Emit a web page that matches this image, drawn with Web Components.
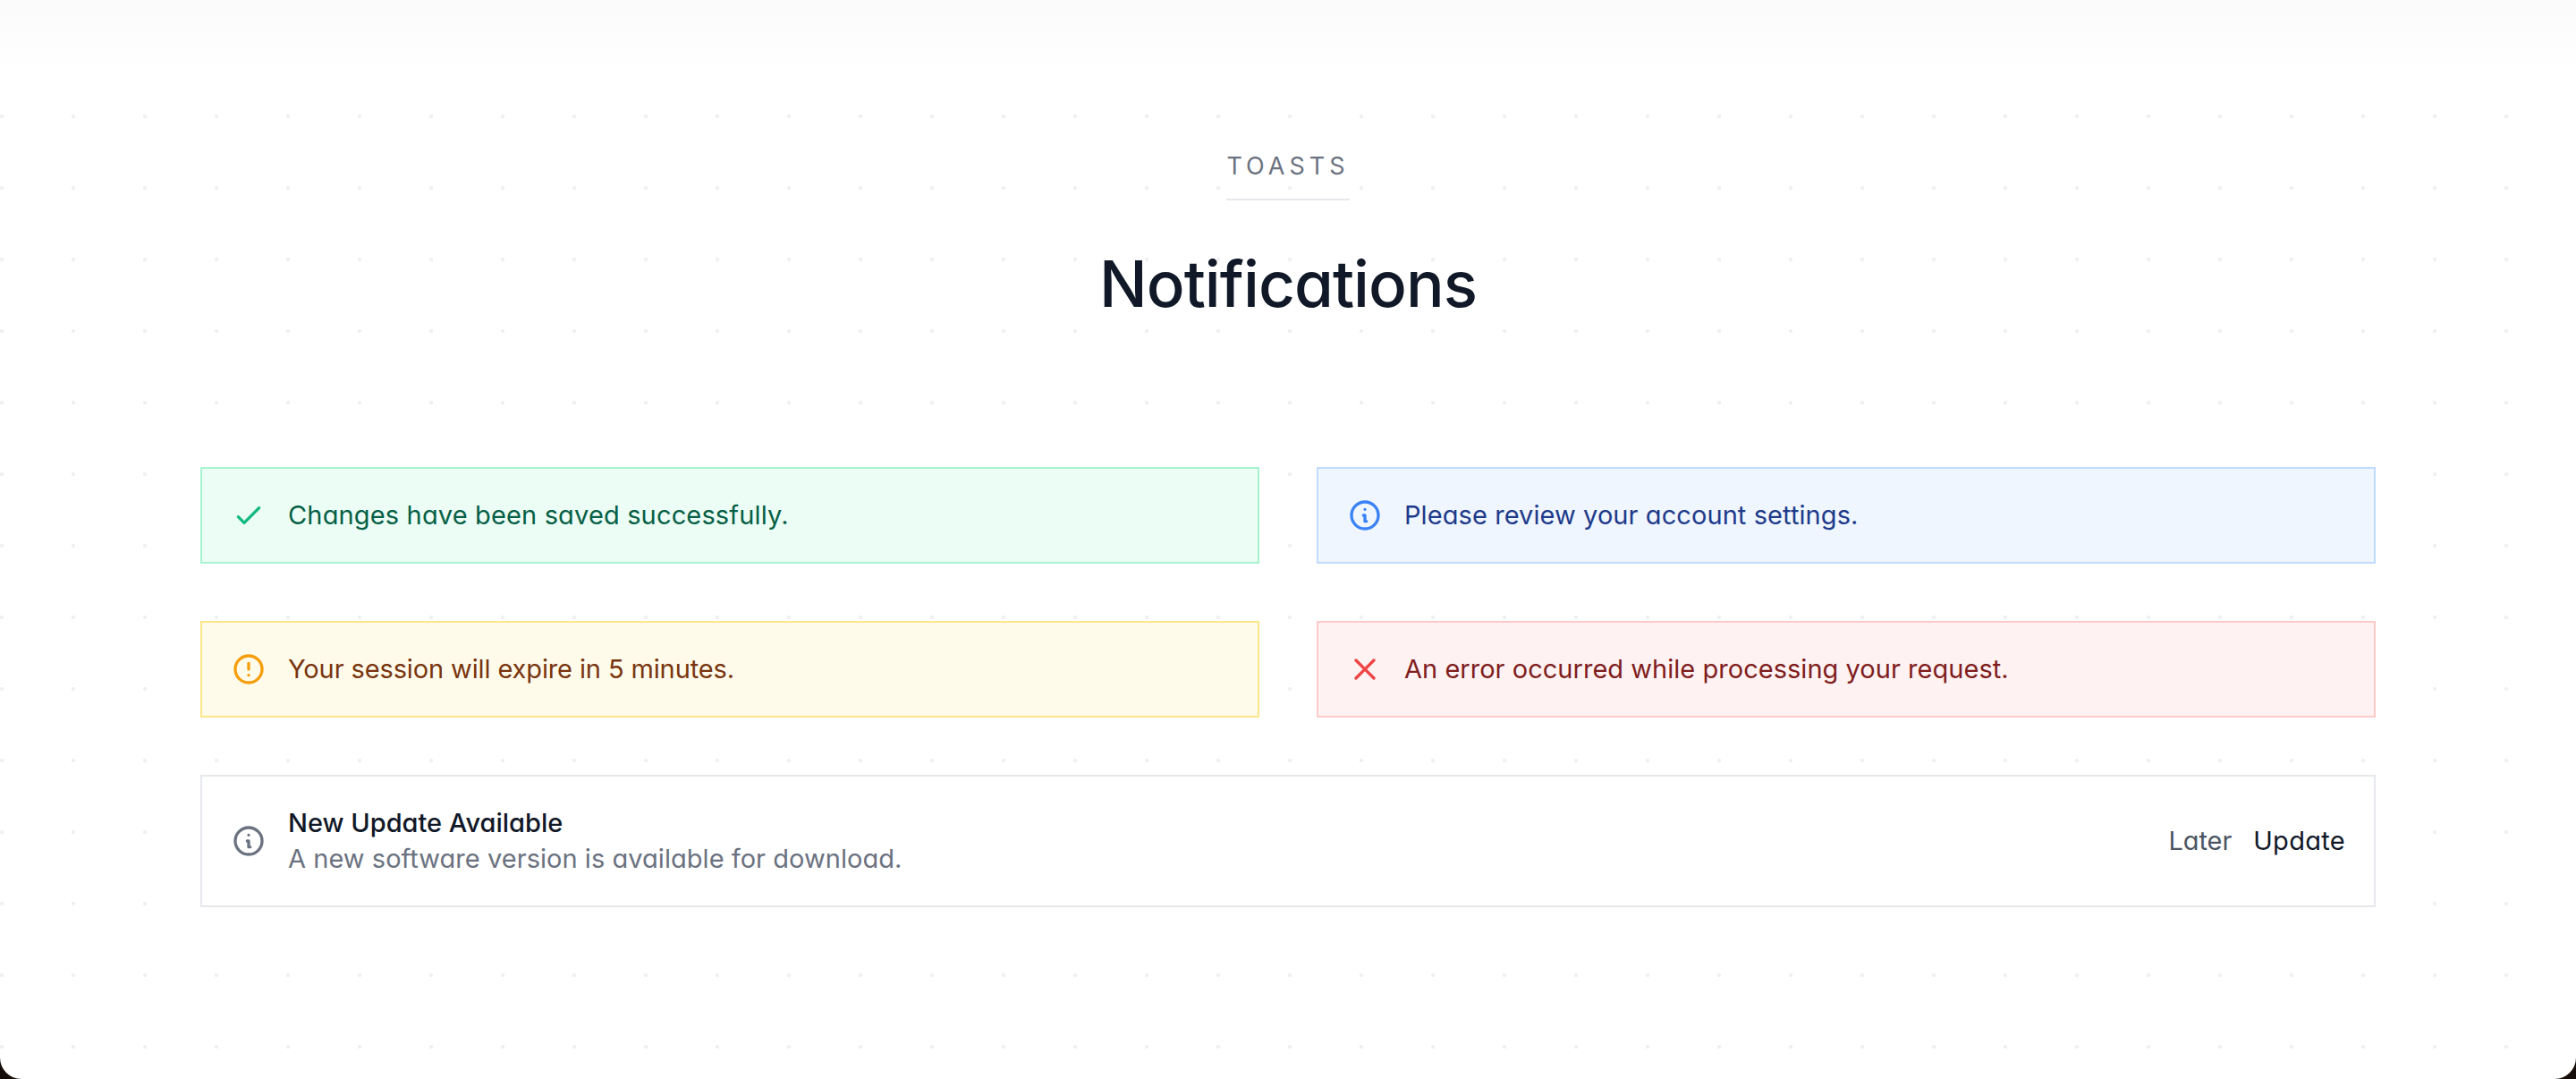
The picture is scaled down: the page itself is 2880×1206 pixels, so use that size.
<!DOCTYPE html>
<html lang="en">
<head>
<meta charset="utf-8">
<title>Notifications</title>
<style>
  html { background: #140c06; }
  body {
    margin: 0;
    font-family: "Inter", "Noto Sans", sans-serif;
    font-feature-settings: "cv11";
  }
</style>
</head>
<body>

<template id="tpl-page">
  <style>
    :host {
      display: block;
      height: 1206px;
      box-sizing: border-box;
      padding: 166px 224px 0;
      border-radius: 0 0 24px 24px;
      background-color: #fff;
      background-image:
        linear-gradient(#fbfbfb, #fff 84px),
        radial-gradient(circle at 2px 2px, #eff0f2 1.8px, transparent 2.6px);
      background-size: 100% 120px, 80px 80px;
      background-position: 0 0, 0 48px;
      background-repeat: no-repeat, repeat;
    }
  </style>
  <slot></slot>
</template>

<template id="tpl-heading">
  <style>
    :host {
      display: flex;
      flex-direction: column;
      align-items: center;
      margin-bottom: 160px;
    }
    .eyebrow {
      font-size: 27px;
      line-height: 40px;
      letter-spacing: 5px;
      color: #6b7280;
      padding-bottom: 16px;
      border-bottom: 2px solid #e5e7eb;
    }
    h1 {
      margin: 48px 0 0;
      font-size: 71px;
      line-height: 90px;
      letter-spacing: -0.95px;
      font-weight: 500;
      color: #111827;
    }
  </style>
  <div class="eyebrow"><slot name="eyebrow"></slot></div>
  <h1><slot></slot></h1>
</template>

<template id="tpl-grid">
  <style>
    :host {
      display: grid;
      grid-template-columns: 1fr 1fr;
      gap: 64px;
    }
    ::slotted(.wide) { grid-column: 1 / -1; }
  </style>
  <slot></slot>
</template>

<template id="tpl-toast">
  <style>
    :host {
      display: flex;
      align-items: center;
      gap: 24px;
      padding: 32px;
      border: 2px solid var(--line, #e5e7eb);
      background: var(--fill, #fff);
      color: var(--ink, #111827);
      font-size: 29px;
      line-height: 40px;
      letter-spacing: var(--track, 0);
    }
    :host([kind="success"]) { --line: #a7f3d0; --fill: #ecfdf5; --ink: #065f46; --mark: #10b981; --track: 0.15px; }
    :host([kind="info"])    { --line: #bfdbfe; --fill: #eff6ff; --ink: #1e3a8a; --mark: #3b82f6; --track: 0.08px; }
    :host([kind="warning"]) { --line: #fde68a; --fill: #fffbeb; --ink: #78350f; --mark: #f59e0b; --track: -0.12px; }
    :host([kind="error"])   { --line: #fecaca; --fill: #fef2f2; --ink: #7f1d1d; --mark: #ef4444; --track: 0.03px; }
    svg {
      flex: none;
      width: 40px;
      height: 40px;
      fill: none;
      stroke: var(--mark, #6b7280);
      stroke-width: 2;
      stroke-linecap: round;
      stroke-linejoin: round;
    }
    .body { flex: 1; min-width: 0; }
  </style>
  <svg viewBox="0 0 24 24"><path></path></svg>
  <div class="body"><slot></slot></div>
  <slot name="actions"></slot>
</template>

<template id="tpl-update">
  <style>
    :host { display: block; }
    .title { font-weight: 460; color: #111827; }
    .desc { color: #6b7280; letter-spacing: 0.04px; }
  </style>
  <div class="title"><slot name="title"></slot></div>
  <div class="desc"><slot></slot></div>
</template>

<template id="tpl-actions">
  <style>
    :host { display: flex; gap: 24px; }
    .later { color: #4b5563; letter-spacing: -0.1px; }
    .update { color: #111827; letter-spacing: 0.3px; }
  </style>
  <span class="later">Later</span>
  <span class="update">Update</span>
</template>

<notify-page>
  <notify-heading>
    <span slot="eyebrow">TOASTS</span>
    Notifications
  </notify-heading>
  <toast-grid>
    <toast-card kind="success" icon="check">Changes have been saved successfully.</toast-card>
    <toast-card kind="info" icon="info">Please review your account settings.</toast-card>
    <toast-card kind="warning" icon="alert">Your session will expire in 5 minutes.</toast-card>
    <toast-card kind="error" icon="close">An error occurred while processing your request.</toast-card>
    <toast-card class="wide" icon="info">
      <update-text>
        <span slot="title">New Update Available</span>
        A new software version is available for download.
      </update-text>
      <toast-actions slot="actions"></toast-actions>
    </toast-card>
  </toast-grid>
</notify-page>

<script>
  const ICONS = {
    check: "M5 13l4 4L19 7",
    info: "M13 16h-1v-4h-1m1-4h.01M21 12a9 9 0 11-18 0 9 9 0 0118 0z",
    alert: "M12 8v4m0 4h.01M21 12a9 9 0 11-18 0 9 9 0 0118 0z",
    close: "M6 18L18 6M6 6l12 12"
  };

  // each element just clones its template
  function plain(tag, tplId) {
    customElements.define(tag, class extends HTMLElement {
      constructor() {
        super();
        this.attachShadow({ mode: 'open' });
        this.shadowRoot.appendChild(document.getElementById(tplId).content.cloneNode(true));
      }
    });
  }

  plain('notify-page', 'tpl-page');
  plain('notify-heading', 'tpl-heading');
  plain('toast-grid', 'tpl-grid');
  plain('update-text', 'tpl-update');
  plain('toast-actions', 'tpl-actions');

  class ToastCard extends HTMLElement {
    constructor() {
      super();
      this.attachShadow({ mode: 'open' });
      this.shadowRoot.appendChild(document.getElementById('tpl-toast').content.cloneNode(true));
    }
    connectedCallback() {
      this.shadowRoot.querySelector('path').setAttribute('d', ICONS[this.getAttribute('icon')]);
    }
  }
  customElements.define('toast-card', ToastCard);
</script>
</body>
</html>
